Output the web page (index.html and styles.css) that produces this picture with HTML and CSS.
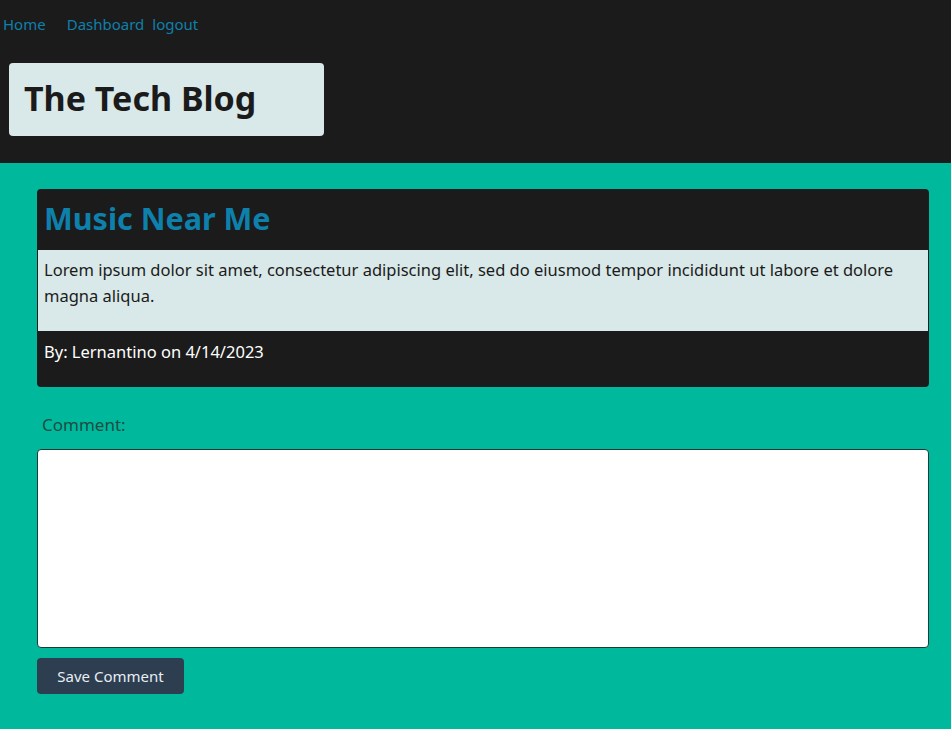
FILE: index.html
```html
<!DOCTYPE html>
<html lang="en">
<head>
<meta charset="utf-8">
<title>The Tech Blog</title>
<link rel="stylesheet" href="styles.css">
</head>
<body>
<header class="site-header">
  <nav class="nav">
    <a class="nav-link nav-home" href="#">Home</a>
    <a class="nav-link" href="#">Dashboard</a>
    <a class="nav-link" href="#">logout</a>
  </nav>
  <div class="brand">
    <h1 class="brand-title">The Tech Blog</h1>
  </div>
</header>
<main class="main">
  <article class="post">
    <h2 class="post-title">Music Near Me</h2>
    <div class="post-body">
      <p>Lorem ipsum dolor sit amet, consectetur adipiscing elit, sed do eiusmod tempor incididunt ut labore et dolore magna aliqua.</p>
    </div>
    <div class="post-meta">By: Lernantino on 4/14/2023</div>
  </article>
  <form class="comment-form">
    <label class="comment-label" for="comment">Comment:</label>
    <textarea class="comment-input" id="comment"></textarea>
    <button class="btn-save" type="button">Save Comment</button>
  </form>
</main>
</body>
</html>
```
FILE: styles.css
```css
html, body {
  margin: 0;
  padding: 0;
}
body {
  background: #00b99d;
  font-family: "Noto Sans", "Open Sans", sans-serif;
  min-height: 729px;
}
.site-header {
  background: #1b1b1b;
  padding: 12px 0 27px 0;
}
.nav {
  display: flex;
  height: 24px;
  align-items: center;
  padding-left: 3px;
}
.nav-link {
  color: #0e80ac;
  text-decoration: none;
  font-size: 15px;
  line-height: 24px;
  margin-right: 8px;
}
.nav-home {
  margin-right: 21px;
}
.brand {
  margin: 27px 0 0 9px;
  width: 315px;
  height: 73px;
  background: #d9e8e8;
  border-radius: 4px;
  display: flex;
  align-items: center;
  box-sizing: border-box;
  padding-left: 15px;
  padding-bottom: 4px;
}
.brand-title {
  margin: 0;
  font-size: 34px;
  font-weight: 700;
  color: #1b1b1b;
  line-height: 1;
}
.main {
  padding: 26px 22px 30px 37px;
}
.post {
  background: #1b1b1b;
  border-radius: 4px;
  overflow: hidden;
  padding: 0 1px;
}
.post-title {
  margin: 0;
  height: 61px;
  box-sizing: border-box;
  display: flex;
  align-items: center;
  padding-left: 6px;
  padding-bottom: 3px;
  font-size: 30.5px;
  font-weight: 700;
  color: #0e80ac;
}
.post-body {
  background: #d9e8e8;
  padding: 7px 6px 22px 6px;
  min-height: 52px;
}
.post-body p {
  margin: 0;
  font-size: 16.5px;
  line-height: 26px;
  color: #1b1b1b;
}
.post-meta {
  height: 56px;
  box-sizing: border-box;
  padding: 9px 6px 0 6px;
  font-size: 16.5px;
  line-height: 24px;
  color: #ffffff;
}
.comment-form {
  display: flex;
  flex-direction: column;
  align-items: flex-start;
  margin-top: 26px;
}
.comment-label {
  font-size: 17px;
  line-height: 24px;
  color: #1d4d43;
  padding-left: 5px;
  margin-bottom: 12px;
}
.comment-input {
  width: 100%;
  height: 199px;
  box-sizing: border-box;
  border: 1px solid #1b3b36;
  border-radius: 4px;
  background: #ffffff;
  resize: none;
  margin: 0;
}
.btn-save {
  margin-top: 10px;
  width: 147px;
  height: 36px;
  background: #2c3e50;
  color: #e8eef2;
  border: none;
  border-radius: 4px;
  font-family: "Noto Sans", "Open Sans", sans-serif;
  font-size: 15px;
  padding: 0;
}
```
